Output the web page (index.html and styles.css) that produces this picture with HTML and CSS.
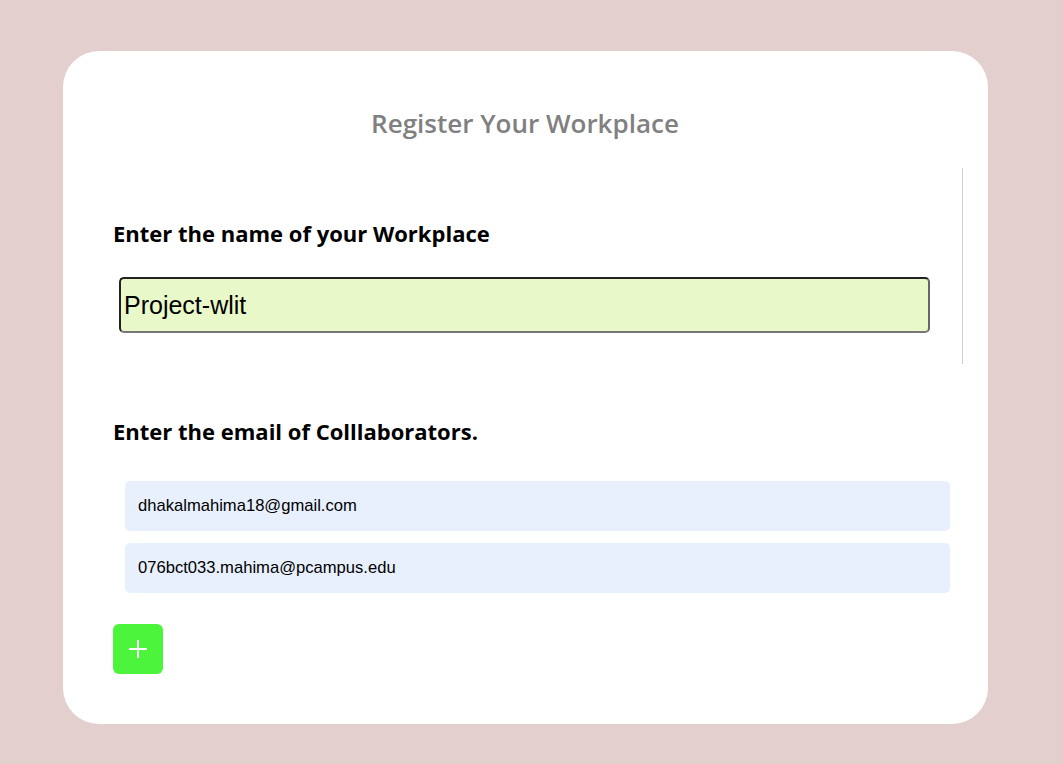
FILE: index.html
```html
<!DOCTYPE html>
<html>
<head>
<meta charset="utf-8">
<link rel="stylesheet" href="styles.css">
</head>
<body>
<div class="card">
  <h1 class="title">Register Your Workplace</h1>
  <section class="name-section">
    <h2 class="label">Enter the name of your Workplace</h2>
    <div class="name-input">Project-wlit</div>
  </section>
  <section class="email-section">
    <h2 class="label">Enter the email of Colllaborators.</h2>
    <div class="emails">
      <div class="email">dhakalmahima18@gmail.com</div>
      <div class="email">076bct033.mahima@pcampus.edu</div>
    </div>
    <button class="add" aria-label="add">
      <svg width="20" height="20" viewBox="0 0 20 20"><path d="M10 1v18M1 10h18" stroke="#fff" stroke-width="2" fill="none"/></svg>
    </button>
  </section>
</div>
</body>
</html>
```

FILE: styles.css
```css
html, body {
  margin: 0;
  padding: 0;
  background: #e3cfce;
}
body {
  padding: 51px 75px 40px 63px;
  font-family: "Open Sans", "Noto Sans", sans-serif;
}
.card {
  background: #fff;
  border-radius: 36px;
  height: 673px;
  box-sizing: border-box;
  padding: 51px 25px 0 50px;
}
.title {
  margin: 0;
  text-align: center;
  font-size: 26px;
  font-weight: 600;
  color: #808080;
  line-height: 42px;
  padding-right: 26px;
}
.name-section {
  margin-top: 24px;
  height: 196px;
  border-right: 1px solid #d0d0d0;
  padding-top: 51px;
  box-sizing: border-box;
}
.label {
  margin: 0;
  font-size: 22px;
  font-weight: 700;
  color: #000;
  line-height: 28px;
}
.name-input {
  margin: 30px 32px 0 6px;
  height: 56px;
  box-sizing: border-box;
  border: 2px solid;
  border-color: #222 #666 #777 #222;
  border-radius: 5px;
  background: #e8f8c8;
  font-family: "Liberation Sans", Arial, sans-serif;
  font-size: 25px;
  padding-left: 3px;
  padding-top: 1px;
  display: flex;
  align-items: center;
  color: #000;
}
.email-section {
  padding-top: 53px;
}
.emails {
  margin: 36px 13px 0 12px;
  display: flex;
  flex-direction: column;
  gap: 12px;
}
.email {
  height: 50px;
  background: #e8f0fe;
  border-radius: 5px;
  display: flex;
  align-items: center;
  padding-left: 13px;
  font-family: "Liberation Sans", Arial, sans-serif;
  font-size: 16.6px;
  color: #000;
}
.add {
  margin-top: 31px;
  width: 50px;
  height: 50px;
  border: none;
  border-radius: 6px;
  background: #4cf43c;
  display: flex;
  align-items: center;
  justify-content: center;
  padding: 0;
}
```
